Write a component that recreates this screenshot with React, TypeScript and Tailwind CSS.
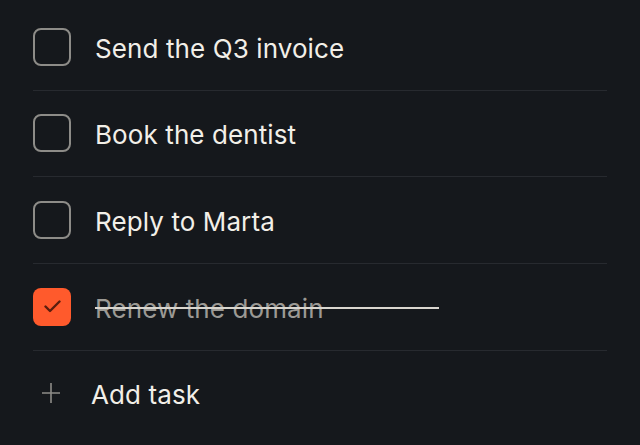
import React from "react";

const tasks = [
  { label: "Send the Q3 invoice", done: false },
  { label: "Book the dentist", done: false },
  { label: "Reply to Marta", done: false },
  { label: "Renew the domain", done: true },
];

export default function App() {
  return (
    <div
      className="w-[640px] h-[445px] bg-[#15181c] overflow-hidden pt-[4px]"
      style={{ fontFamily: "Inter, 'Noto Sans', sans-serif" }}
    >
      <div className="mx-[33px] w-[574px]">
        {tasks.map((t) => (
          <div
            key={t.label}
            className="h-[86.67px] flex items-center border-b-[1.5px] border-[#272a2f]"
          >
            {t.done ? (
              <div className="w-[38px] h-[38px] rounded-[8px] bg-[#ff5a2c] flex items-center justify-center shrink-0">
                <svg width="17" height="13" viewBox="0 0 17 13" fill="none">
                  <path
                    d="M1.5 6.5 L6 11 L15.5 1.5"
                    stroke="#5a1e0e"
                    strokeWidth="2.4"
                    strokeLinecap="round"
                    strokeLinejoin="round"
                  />
                </svg>
              </div>
            ) : (
              <div className="w-[38px] h-[38px] rounded-[8px] border-2 border-[#8d8c88] shrink-0" />
            )}
            {t.done ? (
              <div className="relative ml-[24px] w-[344px] pt-[3px]">
                <span className="text-[26px] text-[#9b9994] tracking-[0.1px]">{t.label}</span>
                <div className="absolute left-0 right-0 top-[50%] h-[2px] bg-[#d9d6cf]" />
              </div>
            ) : (
              <span className="ml-[24px] pt-[3px] text-[26px] text-[#f2efe8] tracking-[0.1px]">{t.label}</span>
            )}
          </div>
        ))}
        <div className="h-[84px] flex items-center">
          <div className="w-[36px] flex items-center justify-center shrink-0">
            <svg width="18" height="20" viewBox="0 0 18 20">
              <path d="M9 0 V20 M0 10 H18" stroke="#8d8c88" strokeWidth="1.6" />
            </svg>
          </div>
          <span className="ml-[22px] pt-[3px] text-[26px] text-[#f2efe8] tracking-[0.1px]">Add task</span>
        </div>
      </div>
    </div>
  );
}
